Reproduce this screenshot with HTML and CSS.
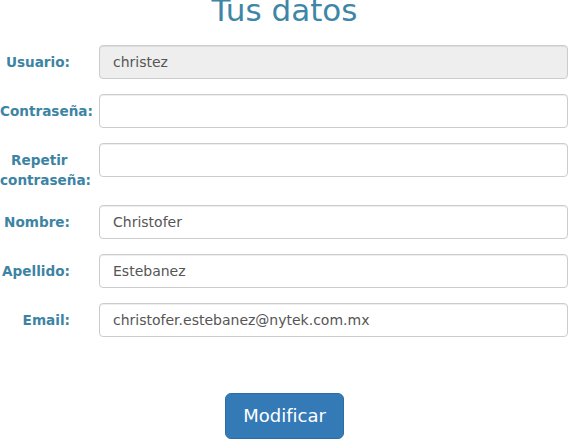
FILE: index.html
```html
<!DOCTYPE html>
<html lang="es">
<head>
<meta charset="utf-8">
<title>Tus datos</title>
<link rel="stylesheet" href="styles.css">
</head>
<body>
<div class="page">
  <h1 class="title">Tus datos</h1>
  <form class="form">
    <div class="row">
      <label class="label">Usuario:</label>
      <input class="input" type="text" value="christez" disabled>
    </div>
    <div class="row">
      <label class="label">Contraseña:</label>
      <input class="input" type="password">
    </div>
    <div class="row">
      <label class="label label-two"><span class="l1">Repetir</span><span class="l2">contraseña:</span></label>
      <input class="input" type="password">
    </div>
    <div class="row">
      <label class="label">Nombre:</label>
      <input class="input" type="text" value="Christofer">
    </div>
    <div class="row">
      <label class="label">Apellido:</label>
      <input class="input" type="text" value="Estebanez">
    </div>
    <div class="row">
      <label class="label">Email:</label>
      <input class="input" type="text" value="christofer.estebanez@nytek.com.mx">
    </div>
    <div class="actions">
      <button class="btn" type="button">Modificar</button>
    </div>
  </form>
</div>
</body>
</html>
```

FILE: styles.css
```css
html, body {
  margin: 0;
  padding: 0;
  background: #fff;
}
body {
  font-family: "DejaVu Sans", "Noto Sans", sans-serif;
  font-size: 14px;
  color: #555;
  overflow: hidden;
}
.page {
  width: 569px;
}
.title {
  margin: -12px 0 12px;
  height: 45px;
  font-size: 31px;
  line-height: 45px;
  font-weight: 400;
  text-align: center;
  color: #3d86a7;
}
.form {
  display: flex;
  flex-direction: column;
}
.row {
  display: flex;
  align-items: flex-start;
  margin-bottom: 15px;
}
.label {
  width: 70px;
  flex: none;
  margin-right: 29px;
  padding-top: 7px;
  font-size: 13.6px;
  line-height: 20px;
  font-weight: 700;
  color: #3d84a4;
  text-align: right;
  white-space: nowrap;
}
.label-two {
  display: flex;
  flex-direction: column;
  text-align: left;
}
.label-two .l1 {
  padding-left: 11px;
}
.input {
  flex: 1;
  min-width: 0;
  height: 34px;
  box-sizing: border-box;
  margin: 0 1px 0 0;
  padding: 6px 13px;
  font-family: inherit;
  font-size: 14px;
  color: #555;
  background: #fff;
  border: 1px solid #ccc;
  border-radius: 4px;
  box-shadow: inset 0 1px 1px rgba(0,0,0,0.075);
}
.input:disabled {
  background: #eee;
  color: #555;
  opacity: 1;
}
.actions {
  display: flex;
  justify-content: center;
  padding-top: 41px;
}
.btn {
  width: 119px;
  height: 46px;
  box-sizing: border-box;
  padding: 10px 16px;
  font-family: inherit;
  font-size: 18px;
  line-height: 24px;
  color: #fff;
  background: #337ab7;
  border: 1px solid #2e6da4;
  border-radius: 6px;
}
```
